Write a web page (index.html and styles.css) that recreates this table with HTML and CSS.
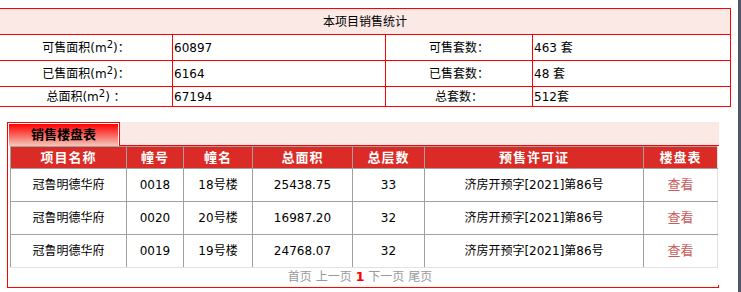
FILE: index.html
```html
<!DOCTYPE html>
<html lang="zh-CN">
<head>
<meta charset="utf-8">
<title>本项目销售统计</title>
<link rel="stylesheet" href="styles.css">
</head>
<body>
<div class="page">
  <table class="stats">
    <colgroup>
      <col class="c1"><col class="c2"><col class="c3"><col class="c4">
    </colgroup>
    <tr class="stats-head"><td colspan="4">本项目销售统计</td></tr>
    <tr>
      <td class="lbl">可售面积(m<sup>2</sup>)：</td><td class="val">60897</td>
      <td class="lbl">可售套数：</td><td class="val">463 套</td>
    </tr>
    <tr>
      <td class="lbl">已售面积(m<sup>2</sup>)：</td><td class="val">6164</td>
      <td class="lbl">已售套数：</td><td class="val">48 套</td>
    </tr>
    <tr class="short">
      <td class="lbl">总面积(m<sup>2</sup>) ：</td><td class="val">67194</td>
      <td class="lbl">总套数：</td><td class="val">512套</td>
    </tr>
  </table>

  <div class="panel">
    <div class="panel-head">
      <div class="tab"><div class="tab-inner">销售楼盘表</div></div>
      <div class="tab-fill"></div>
    </div>
    <div class="panel-body">
      <table class="list">
        <colgroup>
          <col class="l1"><col class="l2"><col class="l3"><col class="l4"><col class="l5"><col class="l6"><col class="l7">
        </colgroup>
        <tr class="list-head">
          <th>项目名称</th><th>幢号</th><th>幢名</th><th>总面积</th><th>总层数</th><th>预售许可证</th><th class="last">楼盘表</th>
        </tr>
        <tr>
          <td>冠鲁明德华府</td><td>0018</td><td>18号楼</td><td>25438.75</td><td>33</td><td>济房开预字[2021]第86号</td><td class="last"><a class="view">查看</a></td>
        </tr>
        <tr>
          <td>冠鲁明德华府</td><td>0020</td><td>20号楼</td><td>16987.20</td><td>32</td><td>济房开预字[2021]第86号</td><td class="last"><a class="view">查看</a></td>
        </tr>
        <tr class="final">
          <td>冠鲁明德华府</td><td>0019</td><td>19号楼</td><td>24768.07</td><td>32</td><td>济房开预字[2021]第86号</td><td class="last"><a class="view">查看</a></td>
        </tr>
      </table>
      <div class="pager">首页 上一页 <b class="cur">1</b> 下一页 尾页</div>
      <div class="tick"></div>
    </div>
  </div>
</div>
<div class="strip"></div>
</body>
</html>
```
FILE: styles.css
```css
html, body {
  margin: 0;
  padding: 0;
  background: #ffffff;
}
body {
  display: flex;
  min-height: 100vh;
  overflow: hidden;
  font-family: "DejaVu Sans", "Noto Sans CJK SC", sans-serif;
  font-size: 12px;
  color: #000;
}
.page {
  flex: 1;
  padding-top: 8px;
}
.strip {
  width: 3px;
  background: #4f586b;
}

/* top stats table */
.stats {
  border-collapse: collapse;
  table-layout: fixed;
  width: 732px;
  margin-left: -1px;
}
.stats .c1 { width: 173px; }
.stats .c2 { width: 213px; }
.stats .c3 { width: 147px; }
.stats .c4 { width: 198px; }
.stats td {
  border: 1px solid #ff0000;
  padding: 0;
  height: 25px;
  line-height: 14px;
  white-space: nowrap;
}
.stats .short td { height: 19px; }
.stats-head td {
  background: #fbe9e5;
  text-align: center;
}
.stats .lbl { text-align: center; }
.stats .val { text-align: left; padding-left: 1px; }
.stats sup {
  font-size: 10px;
  line-height: 0;
  vertical-align: 4px;
}

/* panel */
.panel {
  margin-top: 15px;
  margin-left: 7px;
  width: 712px;
}
.panel-head {
  display: flex;
  height: 24px;
}
.tab {
  width: 113px;
  box-sizing: border-box;
  border: 1px solid #ff0000;
  border-bottom: none;
  padding: 1px 1px 0 1px;
  background: #fff;
}
.tab-inner {
  height: 100%;
  background: linear-gradient(#ff0000, #f4c8ba);
  text-align: center;
  font-weight: bold;
  font-size: 13px;
  line-height: 22px;
  color: #000;
}
.tab-fill {
  flex: 1;
  background: #fbe9e5;
  border-bottom: 1px solid #ff0000;
}
.panel-body {
  border-left: 1px solid #ff0000;
  border-bottom: 1px solid #ff0000;
}

/* list table */
.list {
  border-collapse: collapse;
  table-layout: fixed;
  width: 707px;
  margin-left: 2px;
}
.list .l1 { width: 116px; }
.list .l2 { width: 57px; }
.list .l3 { width: 69px; }
.list .l4 { width: 100px; }
.list .l5 { width: 72px; }
.list .l6 { width: 219px; }
.list .l7 { width: 74px; }
.list th, .list td {
  border: 1px solid #a0a0a0;
  padding: 0;
  text-align: center;
  white-space: nowrap;
}
.list th {
  background: #da2b26;
  color: #ffffff;
  font-weight: bold;
  font-size: 13px;
  letter-spacing: 1px;
  height: 21px;
  line-height: 16px;
}
.list td {
  height: 32px;
  line-height: 14px;
}
.list .last { border-right-color: #e2e2e2; }
.list .final td { border-bottom-color: #e2e2e2; }
.view {
  color: #c85c5c;
  font-size: 13px;
  cursor: pointer;
}
.pager {
  height: 16px;
  line-height: 16px;
  padding-top: 1px;
  padding-right: 7px;
  text-align: center;
  color: #999999;
  font-size: 12px;
}
.pager .cur {
  color: #ff0000;
  font-size: 13px;
}
.tick {
  height: 2px;
  border-right: 1px solid #ff0000;
}
```
